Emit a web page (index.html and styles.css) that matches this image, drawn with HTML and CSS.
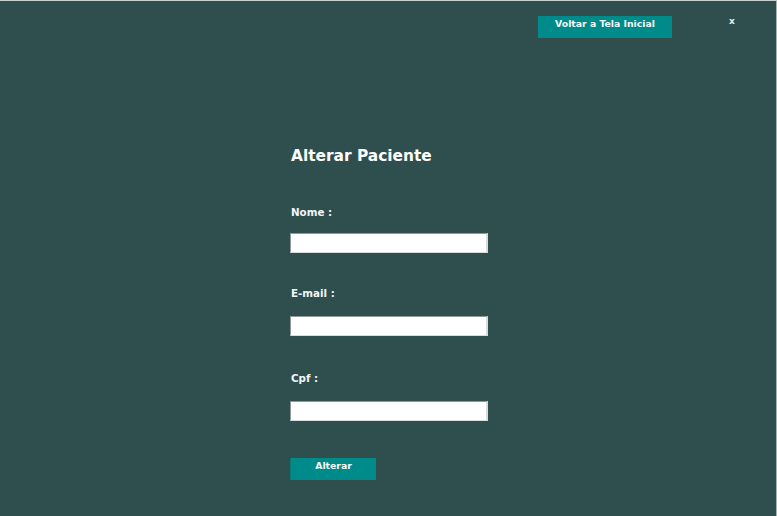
FILE: index.html
```html
<!DOCTYPE html>
<html lang="pt">
<head>
<meta charset="utf-8">
<title>Alterar Paciente</title>
<link rel="stylesheet" href="styles.css">
</head>
<body>
<div class="frame">
  <header class="topbar">
    <button class="btn btn-back" type="button">Voltar a Tela Inicial</button>
    <span class="close">x</span>
  </header>
  <main class="form">
    <h1 class="title">Alterar Paciente</h1>
    <label class="label label-nome">Nome :</label>
    <div class="field field-nome"></div>
    <label class="label label-email">E-mail :</label>
    <div class="field field-email"></div>
    <label class="label label-cpf">Cpf :</label>
    <div class="field field-cpf"></div>
    <button class="btn btn-submit" type="button">Alterar</button>
  </main>
</div>
</body>
</html>
```
FILE: styles.css
```css
html, body {
  margin: 0;
  padding: 0;
}
body {
  width: 777px;
  height: 516px;
  overflow: hidden;
  background: #2f4f4f;
  font-family: "DejaVu Sans", sans-serif;
  color: #ffffff;
}
.frame {
  box-sizing: border-box;
  width: 777px;
  height: 516px;
  border-top: 1px solid #c9cfcf;
  border-right: 1px solid #a9b3b3;
}
.topbar {
  display: flex;
  align-items: flex-start;
  padding-top: 15px;
  padding-left: 538px;
  height: 22px;
}
.btn {
  box-sizing: border-box;
  border: none;
  margin: 0;
  background: #008b8b;
  color: #f4f8f8;
  font-family: "DejaVu Sans", sans-serif;
  font-weight: bold;
  font-size: 9.3px;
  line-height: 11px;
  padding: 0;
  display: block;
}
.btn-back {
  width: 134px;
  height: 22px;
  padding-bottom: 8px;
}
.close {
  margin-left: 57px;
  margin-top: 0;
  font-size: 9px;
  font-weight: bold;
  line-height: 10px;
  color: #e6eded;
}
.form {
  width: 198px;
  margin: 0 0 0 290px;
  display: flex;
  flex-direction: column;
}
.title {
  margin: 109px 0 0 0;
  font-size: 15.4px;
  line-height: 18px;
  height: 18px;
  font-weight: bold;
  padding-left: 1px;
  color: #ffffff;
}
.label {
  display: block;
  font-size: 10.3px;
  line-height: 12px;
  height: 12px;
  font-weight: bold;
  padding-left: 1px;
  color: #f2f5f5;
}
.label-nome { margin-top: 41px; }
.label-email { margin-top: 34px; }
.label-cpf { margin-top: 36px; }
.field {
  box-sizing: border-box;
  height: 20px;
  width: 198px;
  background: #ffffff;
  border-style: solid;
  border-width: 1px 2px 1px 1px;
  border-color: #8c9a9a #d9dcdc #d9dcdc #8c9a9a;
}
.field-nome { margin-top: 15px; }
.field-email { margin-top: 17px; }
.field-cpf { margin-top: 17px; }
.btn-submit {
  margin-top: 37px;
  width: 86px;
  height: 22px;
  border-left: 1px solid #0b7878;
  padding-bottom: 7px;
}
```
